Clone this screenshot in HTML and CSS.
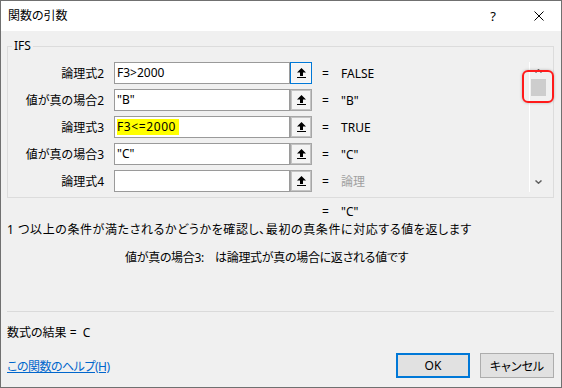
FILE: index.html
```html
<!DOCTYPE html>
<html lang="ja">
<head>
    <meta charset="UTF-8">
    <meta name="viewport" content="width=device-width, initial-scale=1.0">
    <title>関数の引数</title>
    <link rel="stylesheet" href="styles.css">
</head>
<body>

    <div class="janela">
        <!-- Barra de título -->
        <div class="barra-titulo">
            <span class="titulo">関数の引数</span>
            <span class="botao-titulo">?</span>
            <span class="botao-titulo">
                <svg width="10" height="10" viewBox="0 0 10 10"><path d="M0.5 0.5 L9.5 9.5 M9.5 0.5 L0.5 9.5" stroke="#000" stroke-width="1" fill="none"/></svg>
            </span>
        </div>

        <div class="corpo">
            <fieldset class="grupo">
                <legend>IFS</legend>
                <div class="grupo-interno">
                    <div class="argumentos">
                        <span class="rotulo">論理式2</span>
                        <div class="campo">F3&gt;2000</div>
                        <span class="selecionar ativo"><svg width="9" height="10" viewBox="0 0 9 10"><path d="M4.5 0 L9 4.5 L6 4.5 L6 8 L3 8 L3 4.5 L0 4.5 Z" fill="#000"/><rect x="0" y="9" width="9" height="1" fill="#000"/></svg></span>
                        <span class="igual">=</span>
                        <span class="valor">FALSE</span>

                        <span class="rotulo">値が真の場合2</span>
                        <div class="campo">"B"</div>
                        <span class="selecionar"><svg width="9" height="10" viewBox="0 0 9 10"><path d="M4.5 0 L9 4.5 L6 4.5 L6 8 L3 8 L3 4.5 L0 4.5 Z" fill="#000"/><rect x="0" y="9" width="9" height="1" fill="#000"/></svg></span>
                        <span class="igual">=</span>
                        <span class="valor">"B"</span>

                        <span class="rotulo">論理式3</span>
                        <div class="campo"><span class="marcado">F3&lt;=2000</span></div>
                        <span class="selecionar"><svg width="9" height="10" viewBox="0 0 9 10"><path d="M4.5 0 L9 4.5 L6 4.5 L6 8 L3 8 L3 4.5 L0 4.5 Z" fill="#000"/><rect x="0" y="9" width="9" height="1" fill="#000"/></svg></span>
                        <span class="igual">=</span>
                        <span class="valor">TRUE</span>

                        <span class="rotulo">値が真の場合3</span>
                        <div class="campo">"C"</div>
                        <span class="selecionar"><svg width="9" height="10" viewBox="0 0 9 10"><path d="M4.5 0 L9 4.5 L6 4.5 L6 8 L3 8 L3 4.5 L0 4.5 Z" fill="#000"/><rect x="0" y="9" width="9" height="1" fill="#000"/></svg></span>
                        <span class="igual">=</span>
                        <span class="valor">"C"</span>

                        <span class="rotulo">論理式4</span>
                        <div class="campo"></div>
                        <span class="selecionar"><svg width="9" height="10" viewBox="0 0 9 10"><path d="M4.5 0 L9 4.5 L6 4.5 L6 8 L3 8 L3 4.5 L0 4.5 Z" fill="#000"/><rect x="0" y="9" width="9" height="1" fill="#000"/></svg></span>
                        <span class="igual">=</span>
                        <span class="valor vazio">論理</span>
                    </div>

                    <!-- Barra de rolagem -->
                    <div class="rolagem">
                        <span class="seta">
                            <svg width="7" height="4" viewBox="0 0 7 4"><path d="M0.5 3.5 L3.5 0.8 L6.5 3.5" stroke="#606060" stroke-width="1.5" fill="none"/></svg>
                        </span>
                        <span class="polegar"></span>
                        <span class="seta baixo">
                            <svg width="7" height="4" viewBox="0 0 7 4"><path d="M0.5 0.5 L3.5 3.2 L6.5 0.5" stroke="#606060" stroke-width="1.5" fill="none"/></svg>
                        </span>
                        <span class="destaque"></span>
                    </div>
                </div>
            </fieldset>

            <div class="resultado-final"><span class="igual">=</span><span>"C"</span></div>
            <p class="descricao">1 つ以上の条件が満たされるかどうかを確認し、最初の真条件に対応する値を返します</p>
            <p class="descricao-arg"><span class="nome-arg">値が真の場合3:</span><span>は論理式が真の場合に返される値です</span></p>

            <hr class="separador">

            <div class="resultado">数式の結果 =&nbsp;&nbsp;C</div>

            <div class="rodape">
                <a href="#" class="ajuda">この関数のヘルプ(H)</a>
                <button class="botao ok">OK</button>
                <button class="botao">キャンセル</button>
            </div>
        </div>
    </div>

</body>
</html>
```

FILE: styles.css
```css
/* Estilos gerais */
body {
    margin: 0;
    font-family: "Noto Sans", "Noto Sans CJK JP", sans-serif;
    font-size: 12px;
    font-feature-settings: "palt";
    color: #000;
}

.janela {
    width: 562px;
    height: 388px;
    box-sizing: border-box;
    border: 1px solid #707070;
    display: flex;
    flex-direction: column;
    background-color: #f0f0f0;
}

/* Barra de título */
.barra-titulo {
    height: 30px;
    background-color: #fff;
    display: flex;
    align-items: center;
    padding-left: 7px;
}

.titulo {
    flex: 1;
    line-height: 16px;
}

.botao-titulo {
    width: 46px;
    height: 30px;
    display: flex;
    align-items: center;
    justify-content: center;
    font-size: 13px;
}

.botao-titulo:last-child {
    width: 45px;
}

/* Conteúdo */
.corpo {
    flex: 1;
    padding: 0 7px 0 6px;
}

.grupo {
    margin: 7px 0 0;
    padding: 8px 0 5px;
    border: 1px solid #dcdcdc;
    min-width: 0;
}

.grupo legend {
    padding: 0 2px;
    margin-left: 4px;
    line-height: 16px;
}

.grupo-interno {
    display: flex;
}

.argumentos {
    flex: 1;
    display: grid;
    grid-template-columns: 106px 176px 22px 29px 1fr;
    grid-auto-rows: 22px;
    row-gap: 5px;
    align-items: center;
}

.rotulo {
    text-align: right;
    padding-right: 10px;
}

.campo {
    height: 22px;
    box-sizing: border-box;
    border: 1px solid #9a9a9a;
    background-color: #fff;
    padding: 2px 2px;
    line-height: 16px;
    white-space: nowrap;
}

.marcado {
    display: inline-block;
    background-color: #ffff00;
    padding-right: 3px;
    letter-spacing: 0.6px;
}

.selecionar {
    width: 22px;
    height: 22px;
    box-sizing: border-box;
    border: 1px solid #a6a6a6;
    box-shadow: inset 0 0 0 1px #c4c4c4;
    background-color: #f4f4f4;
    display: flex;
    align-items: center;
    justify-content: center;
}

.selecionar.ativo {
    border-color: #0078d7;
    box-shadow: inset 0 0 0 1px #f8f8f8;
}

.igual {
    padding-left: 10px;
}

.valor.vazio {
    color: #a0a0a0;
}

/* Barra de rolagem */
.rolagem {
    position: relative;
    width: 17px;
    margin-right: 7px;
    border-left: 1px solid #fff;
    box-sizing: border-box;
    display: flex;
    flex-direction: column;
    align-items: center;
}

.seta {
    height: 17px;
    display: flex;
    align-items: center;
    justify-content: center;
}

.seta.baixo {
    margin-top: auto;
    height: 20px;
}

.polegar {
    width: 15px;
    height: 17px;
    background-color: #cdcdcd;
}

.destaque {
    position: absolute;
    left: -8px;
    top: 8px;
    width: 32px;
    height: 33px;
    box-sizing: border-box;
    border: 2px solid #ff1a1a;
    border-radius: 6px;
    box-shadow: 0 0 3px rgba(0, 0, 0, 0.25);
}

/* Textos de descrição */
.resultado-final {
    margin-top: 6px;
    padding-left: 315px;
    line-height: 16px;
}

.resultado-final .igual {
    padding-left: 0;
    display: inline-block;
    width: 19px;
}

.descricao {
    margin: 2px 0 0;
    line-height: 16px;
    letter-spacing: 0.6px;
}

.descricao-arg {
    margin: 12px 0 0;
    padding-left: 118px;
    line-height: 16px;
    letter-spacing: -0.3px;
}

.nome-arg {
    margin-right: 11px;
}

.separador {
    margin: 45px 0 0;
    border: none;
    height: 1px;
    background-color: #dadada;
}

.resultado {
    margin-top: 13px;
    line-height: 16px;
}

/* Rodapé */
.rodape {
    margin-top: 12px;
    display: flex;
    align-items: center;
}

.ajuda {
    flex: 1;
    color: #0066cc;
    text-decoration: underline;
    letter-spacing: -0.5px;
}

.botao {
    width: 74px;
    height: 25px;
    margin-left: 10px;
    box-sizing: border-box;
    border: 1px solid #adadad;
    background-color: #e1e1e1;
    font-family: inherit;
    font-size: 12px;
    font-feature-settings: "palt";
    color: #000;
    padding: 0;
}

.botao.ok {
    border: 2px solid #0078d7;
}
```
